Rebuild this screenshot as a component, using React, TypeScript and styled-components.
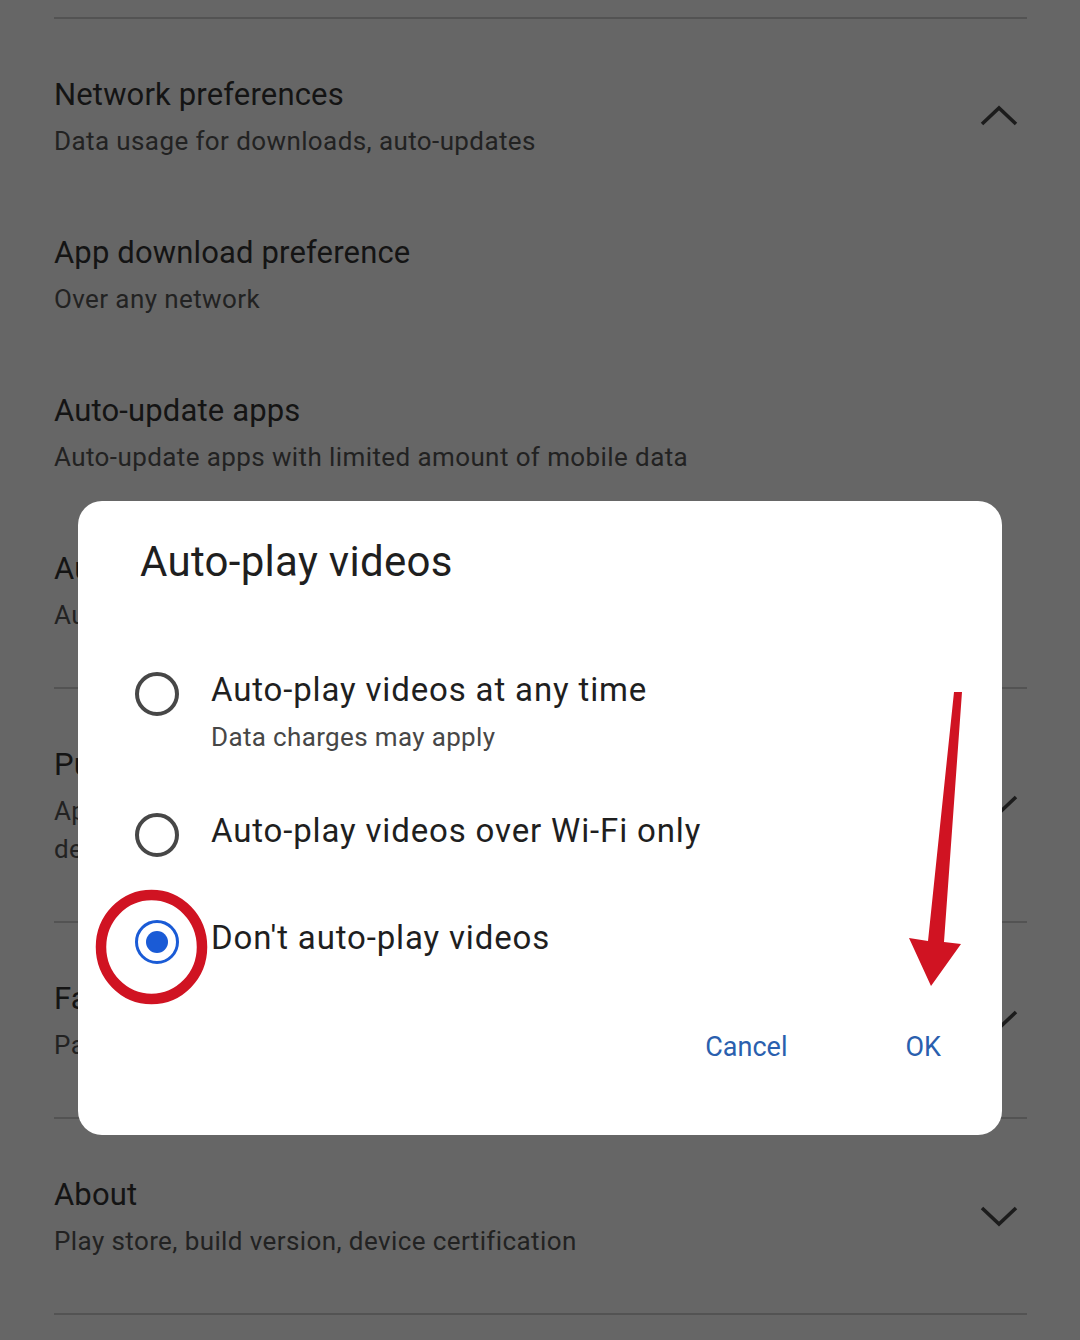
import React from "react";
import styled, { createGlobalStyle } from "styled-components";

const Global = createGlobalStyle`
  html, body { margin: 0; padding: 0; background: #666666; }
  body { font-family: Roboto, "Liberation Sans", sans-serif; }
  * { box-sizing: border-box; }
`;

const Page = styled.div`
  position: relative;
  width: 1080px;
  height: 1340px;
  overflow: hidden;
  background: #666666;
  padding-top: 17px;
`;

const List = styled.div`
  margin: 0 53px 0 54px;
`;

const Divider = styled.div`
  height: 2px;
  background: #535353;
`;

const Section = styled.div`
  padding: 18px 0;
`;

const Row = styled.div`
  display: flex;
  align-items: center;
  justify-content: space-between;
  padding: 35px 0;
`;

const RowText = styled.div`
  display: flex;
  flex-direction: column;
`;

const RowTitle = styled.div`
  font-size: 31px;
  line-height: 46px;
  color: #141414;
  letter-spacing: 0.15px;
  white-space: nowrap;
`;

const RowSub = styled.div`
  margin-top: 4px;
  font-size: 26px;
  line-height: 38px;
  color: #222222;
  letter-spacing: 0.4px;
  white-space: nowrap;
`;

const Chevron = styled.svg`
  flex: none;
  margin-right: 9px;
`;

const Dialog = styled.div`
  position: absolute;
  left: 78px;
  top: 501px;
  width: 924px;
  background: #ffffff;
  border-radius: 24px;
  padding: 35px 61px 68px 57px;
  display: flex;
  flex-direction: column;
`;

const DialogTitle = styled.div`
  padding-left: 5px;
  font-size: 42px;
  line-height: 52px;
  color: #1f1f1f;
  letter-spacing: 0.3px;
`;

const Option = styled.div<{ $mt: number }>`
  display: flex;
  align-items: flex-start;
  gap: 32px;
  margin-top: ${(p) => p.$mt}px;
`;

const Radio = styled.div<{ $checked?: boolean }>`
  flex: none;
  width: 44px;
  height: 44px;
  margin-top: 4px;
  border-radius: 50%;
  border: ${(p) => (p.$checked ? "3.5px solid #1a5bd6" : "4px solid #474747")};
  display: flex;
  align-items: center;
  justify-content: center;
`;

const RadioDot = styled.div`
  width: 22px;
  height: 22px;
  border-radius: 50%;
  background: #1a5bd6;
`;

const OptionText = styled.div`
  display: flex;
  flex-direction: column;
`;

const OptionLabel = styled.div`
  font-size: 33px;
  line-height: 44px;
  color: #1f1f1f;
  letter-spacing: 0.85px;
  white-space: nowrap;
`;

const OptionSub = styled.div`
  margin-top: 7px;
  font-size: 26px;
  line-height: 36px;
  color: #474747;
  letter-spacing: 0.35px;
`;

const Buttons = styled.div`
  display: flex;
  justify-content: flex-end;
  gap: 118px;
  margin-top: 63px;
`;

const TextButton = styled.div`
  font-size: 27px;
  line-height: 40px;
  color: #2a5fae;
`;

const Annotations = styled.svg`
  position: absolute;
  left: 0;
  top: 0;
  pointer-events: none;
`;

const ChevronIcon = ({ up }: { up?: boolean }) => (
  <Chevron width="38" height="22" viewBox="0 0 38 22">
    <polyline
      points={up ? "2,19 19,3 36,19" : "2,3 19,19 36,3"}
      fill="none"
      stroke="#1c1c1c"
      strokeWidth="3.6"
    />
  </Chevron>
);

type Item = { title: string; sub: string[]; chevron?: "up" | "down" };

const sections: Item[][] = [
  [
    { title: "Network preferences", sub: ["Data usage for downloads, auto-updates"], chevron: "up" },
    { title: "App download preference", sub: ["Over any network"] },
    { title: "Auto-update apps", sub: ["Auto-update apps with limited amount of mobile data"] },
    { title: "Auto-play videos", sub: ["Auto-play videos over Wi-Fi only"] },
  ],
  [
    {
      title: "Purchase authentication",
      sub: ["Apply authentication to Google Play purchases made on this", "device"],
      chevron: "down",
    },
  ],
  [{ title: "Family", sub: ["Parental controls, family library"], chevron: "down" }],
  [{ title: "About", sub: ["Play store, build version, device certification"], chevron: "down" }],
];

export default function App() {
  return (
    <>
      <Global />
      <Page>
        <List>
          <Divider />
          {sections.map((items, si) => (
            <React.Fragment key={si}>
              <Section>
                {items.map((it) => (
                  <Row key={it.title}>
                    <RowText>
                      <RowTitle>{it.title}</RowTitle>
                      <RowSub>
                        {it.sub.map((line, li) => (
                          <React.Fragment key={li}>
                            {li > 0 && <br />}
                            {line}
                          </React.Fragment>
                        ))}
                      </RowSub>
                    </RowText>
                    {it.chevron && <ChevronIcon up={it.chevron === "up"} />}
                  </Row>
                ))}
              </Section>
              <Divider />
            </React.Fragment>
          ))}
        </List>

        <Dialog>
          <DialogTitle>Auto-play videos</DialogTitle>
          <Option $mt={80}>
            <Radio />
            <OptionText>
              <OptionLabel>Auto-play videos at any time</OptionLabel>
              <OptionSub>Data charges may apply</OptionSub>
            </OptionText>
          </Option>
          <Option $mt={54}>
            <Radio />
            <OptionText>
              <OptionLabel>Auto-play videos over Wi-Fi only</OptionLabel>
            </OptionText>
          </Option>
          <Option $mt={59}>
            <Radio $checked>
              <RadioDot />
            </Radio>
            <OptionText>
              <OptionLabel>Don't auto-play videos</OptionLabel>
            </OptionText>
          </Option>
          <Buttons>
            <TextButton>Cancel</TextButton>
            <TextButton>OK</TextButton>
          </Buttons>
        </Dialog>

        <Annotations width="1080" height="1340" viewBox="0 0 1080 1340">
          <ellipse cx="151.5" cy="947" rx="50.5" ry="52" fill="none" stroke="#d01322" strokeWidth="10.5" />
          <polygon
            points="954,692 962,692 944,942 961,944 931,986 909,938 928,941"
            fill="#d01322"
          />
        </Annotations>
      </Page>
    </>
  );
}
